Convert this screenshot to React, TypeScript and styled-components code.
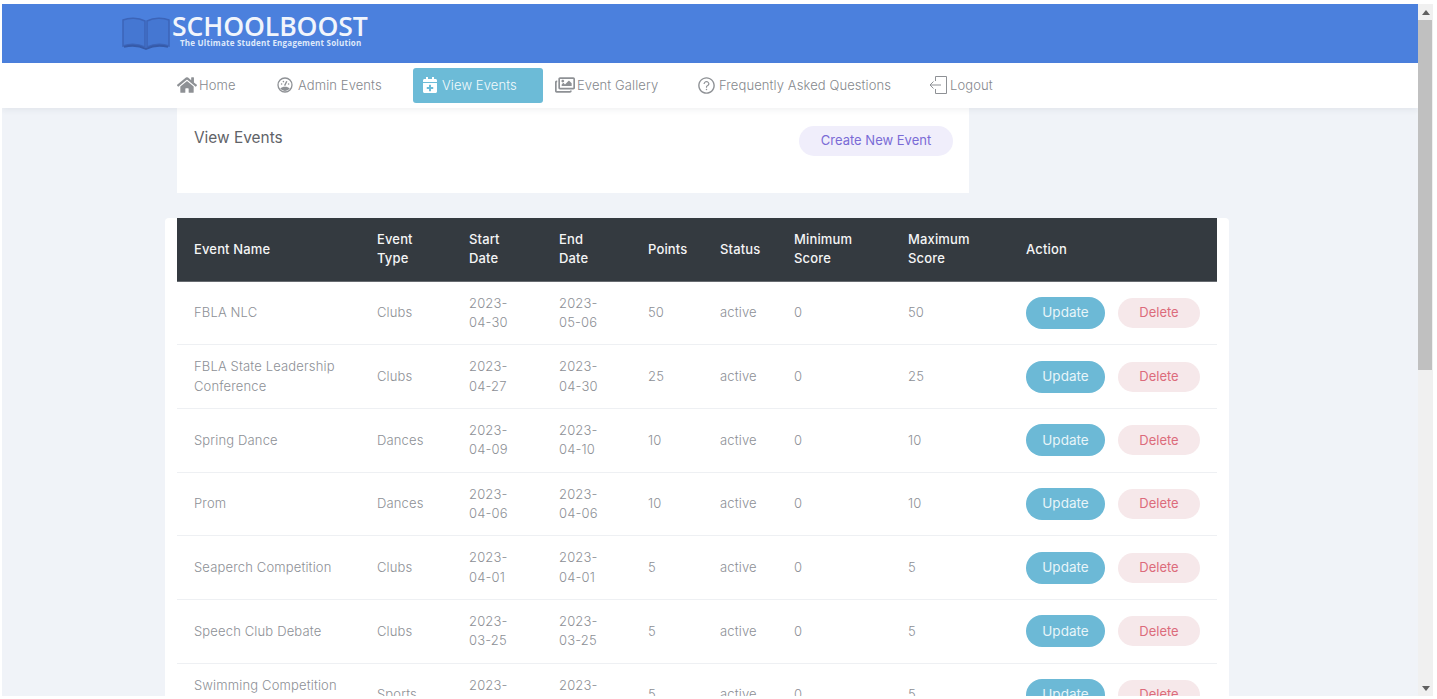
import React from "react";
import styled, { createGlobalStyle } from "styled-components";
import { FaHome, FaCalendarPlus, FaRegImages } from "react-icons/fa";
import { AiOutlineQuestionCircle } from "react-icons/ai";

const Global = createGlobalStyle`
  html, body { margin: 0; height: 100%; overflow: hidden; background: #fff; }
  #root { height: 100%; }
  * { box-sizing: border-box; }
`;

const Frame = styled.div`
  display: flex;
  height: 699px;
  padding: 4px 4px 3px 2px;
  overflow: hidden;
  background: #fff;
  font-family: Inter, "Liberation Sans", sans-serif;
`;
const Page = styled.div`
  flex: 1;
  min-width: 0;
  overflow: hidden;
  background: #f0f3f8;
`;
const Header = styled.header`
  display: flex;
  align-items: center;
  height: 59px;
  padding-left: 120px;
  background: #4b80dd;
`;
const Logo = styled.div`
  display: flex;
  align-items: flex-start;
  gap: 2px;
`;
const LogoWords = styled.div`
  display: flex;
  flex-direction: column;
  font-family: "Open Sans", sans-serif;
  color: #f1f5fc;
`;
const LogoName = styled.span`
  font-size: 26.6px;
  font-weight: 600;
  line-height: 24px;
  margin-top: -3px;
  letter-spacing: -0.1px;
`;
const LogoTag = styled.span`
  font-size: 8px;
  font-weight: 700;
  line-height: 10px;
  margin-left: 8px;
  letter-spacing: 0.22px;
  color: #dfe9fa;
`;
const Nav = styled.nav`
  position: relative;
  display: flex;
  align-items: center;
  height: 45px;
  padding-left: 175px;
  background: #fff;
  box-shadow: 0 2px 6px rgba(40, 50, 70, 0.07);
`;
const NavItem = styled.a<{ $w: number; $active?: boolean; $gap?: number }>`
  display: flex;
  align-items: center;
  gap: ${(p) => p.$gap ?? 2}px;
  flex: none;
  width: ${(p) => p.$w}px;
  height: 35px;
  padding-bottom: 1px;
  font-size: 13px;
  font-weight: 300;
  letter-spacing: 0.1px;
  color: ${(p) => (p.$active ? "#f2fafc" : "#85888d")};
  background: ${(p) => (p.$active ? "#6cbbd7" : "transparent")};
  border-radius: 3px;
  padding-left: ${(p) => (p.$active ? "9px" : "0")};
  margin-right: ${(p) => (p.$active ? "12px" : "0")};
  svg { flex: none; color: ${(p) => (p.$active ? "#fff" : "#8e9195")}; }
`;
const TopCard = styled.section`
  display: flex;
  justify-content: space-between;
  align-items: flex-start;
  width: 792px;
  height: 85px;
  margin-left: 175px;
  padding: 18px 16px 0 17px;
  background: #fff;
`;
const Title = styled.h2`
  margin: 1px 0 0;
  font-size: 15.4px;
  font-weight: 400;
  line-height: 22px;
  color: #5f6368;
`;
const CreateButton = styled.button`
  width: 154px;
  height: 30px;
  padding: 0 0 2px;
  border: 0;
  border-radius: 15px;
  background: #f0eefb;
  color: #7a6bd6;
  font: 400 13px Inter, sans-serif;
`;
const TableCard = styled.section`
  width: 1064px;
  margin: 25px 0 0 163px;
  padding: 0 12px;
  background: #fff;
  border-radius: 4px 4px 0 0;
`;
const Table = styled.table`
  width: 1040px;
  table-layout: fixed;
  border-collapse: collapse;
`;
const Th = styled.th<{ $w: number }>`
  width: ${(p) => p.$w}px;
  height: 63px;
  padding: 0 17px;
  text-align: left;
  background: #343a40;
  border-bottom: 1px solid #676b70;
  color: #f4f5f6;
  font-size: 13px;
  font-weight: 500;
  line-height: 19px;
  letter-spacing: 0.15px;
`;
const Tr = styled.tr`
  border-bottom: 1px solid #eef0f3;
`;
const Td = styled.td`
  padding: 12.15px 17px;
  font-size: 13px;
  font-weight: 300;
  line-height: 19.2px;
  letter-spacing: 0.15px;
  color: #8d9096;
  vertical-align: middle;
`;
const Actions = styled.div`
  display: flex;
  align-items: center;
  gap: 13px;
  white-space: nowrap;
`;
const UpdateButton = styled.button`
  flex: none;
  width: 79px;
  height: 32px;
  padding: 0 0 1px;
  border: 0;
  border-radius: 16px;
  background: #6cb9d6;
  color: #e8f5f9;
  font: 400 13.5px Inter, sans-serif;
`;
const DeleteButton = styled.button`
  flex: none;
  width: 82px;
  height: 30px;
  padding: 0 0 1px;
  border: 0;
  border-radius: 15px;
  background: #f6e8ea;
  color: #dc6b7b;
  font: 400 13px Inter, sans-serif;
`;
const Scrollbar = styled.div`
  flex: none;
  display: flex;
  flex-direction: column;
  width: 15px;
  background: #f0f0f0;
`;
const ScrollArrow = styled.div`
  flex: none;
  display: flex;
  align-items: center;
  justify-content: center;
  height: 16px;
  color: #606060;
`;
const ScrollThumb = styled.div`
  flex: none;
  height: 350px;
  background: #c0c0c0;
  margin-right: 1px;
`;
const ScrollRest = styled.div`
  flex: 1;
`;

function GaugeIcon() {
  return (
    <svg width="16" height="16" viewBox="0 0 16 16" fill="none">
      <circle cx="8" cy="8" r="7" stroke="currentColor" strokeWidth="1.3" />
      <path d="M3.2 11.500a6 6 0 0 0 9.600 0C11.500 10.200 10 9.700 8 9.700s-3.500.5-4.800 1.800z" fill="currentColor" />
      <path d="M7.600 8.600 9.800 4.200" stroke="currentColor" strokeWidth="1.4" />
      <circle cx="4.600" cy="7" r=".8" fill="currentColor" />
      <circle cx="6.400" cy="4.600" r=".8" fill="currentColor" />
      <circle cx="11.600" cy="7" r=".8" fill="currentColor" />
    </svg>
  );
}
function LogoutIcon() {
  return (
    <svg width="19" height="20" viewBox="0 0 19 20" fill="none" stroke="currentColor" strokeWidth="1">
      <path d="M6.500 6V1.500h11v17h-11V14" />
      <path d="M12 10H1M4.500 6.500 1 10l3.500 3.500" />
    </svg>
  );
}
function BookIcon() {
  return (
    <svg width="48" height="33" viewBox="0 0 48 33" fill="none">
      <path d="M1 3c6-2.500 15-2.500 22 1v26c-7-3-16-3-22-1z" fill="#4577d2" stroke="#3c64b8" strokeWidth="1.500" />
      <path d="M47 3c-6-2.500-15-2.500-22 1v26c7-3 16-3 22-1z" fill="#4577d2" stroke="#3c64b8" strokeWidth="1.500" />
      <path d="M2 30c7-2 15-1.500 22 2 7-3.500 15-4 22-2" stroke="#365aa8" strokeWidth="1.800" />
    </svg>
  );
}

const columns: [string, number][] = [
  ["Event Name", 183],
  ["Event Type", 92],
  ["Start Date", 90],
  ["End Date", 89],
  ["Points", 72],
  ["Status", 74],
  ["Minimum Score", 114],
  ["Maximum Score", 118],
  ["Action", 208],
];

const rows = [
  ["FBLA NLC", "Clubs", "2023-04-30", "2023-05-06", "50", "active", "0", "50"],
  ["FBLA State Leadership Conference", "Clubs", "2023-04-27", "2023-04-30", "25", "active", "0", "25"],
  ["Spring Dance", "Dances", "2023-04-09", "2023-04-10", "10", "active", "0", "10"],
  ["Prom", "Dances", "2023-04-06", "2023-04-06", "10", "active", "0", "10"],
  ["Seaperch Competition", "Clubs", "2023-04-01", "2023-04-01", "5", "active", "0", "5"],
  ["Speech Club Debate", "Clubs", "2023-03-25", "2023-03-25", "5", "active", "0", "5"],
  ["Swimming Competition", "Sports", "2023-03-18", "2023-03-18", "5", "active", "0", "5"],
];

export default function App() {
  return (
    <Frame>
      <Global />
      <Page>
        <Header>
          <Logo>
            <BookIcon />
            <LogoWords>
              <LogoName>SCHOOLBOOST</LogoName>
              <LogoTag>The Ultimate Student Engagement Solution</LogoTag>
            </LogoWords>
          </Logo>
        </Header>
        <Nav>
          <NavItem $w={100}><FaHome size={20} />Home</NavItem>
          <NavItem $w={136} $gap={5}><GaugeIcon />Admin Events</NavItem>
          <NavItem $w={130} $active $gap={4}><FaCalendarPlus size={16} />View Events</NavItem>
          <NavItem $w={142}><FaRegImages size={20} />Event Gallery</NavItem>
          <NavItem $w={232} $gap={3}><AiOutlineQuestionCircle size={19} />Frequently Asked Questions</NavItem>
          <NavItem $w={70}><LogoutIcon />Logout</NavItem>
        </Nav>
        <TopCard>
          <Title>View Events</Title>
          <CreateButton>Create New Event</CreateButton>
        </TopCard>
        <TableCard>
          <Table>
            <thead>
              <tr>
                {columns.map(([label, w]) => (
                  <Th key={label} $w={w}>{label}</Th>
                ))}
              </tr>
            </thead>
            <tbody>
              {rows.map((row) => (
                <Tr key={row[0]}>
                  {row.map((cell, i) => (
                    <Td key={i}>
                      {cell}
                      {row[0] === "Swimming Competition" && i === 0 ? <><br />&nbsp;</> : null}
                    </Td>
                  ))}
                  <Td>
                    <Actions>
                      <UpdateButton>Update</UpdateButton>
                      <DeleteButton>Delete</DeleteButton>
                    </Actions>
                  </Td>
                </Tr>
              ))}
            </tbody>
          </Table>
        </TableCard>
      </Page>
      <Scrollbar>
        <ScrollArrow>
          <svg width="8" height="5" viewBox="0 0 8 5"><path d="M4 0l4 5H0z" fill="currentColor" /></svg>
        </ScrollArrow>
        <ScrollThumb />
        <ScrollRest />
        <ScrollArrow>
          <svg width="8" height="5" viewBox="0 0 8 5"><path d="M0 0h8L4 5z" fill="currentColor" /></svg>
        </ScrollArrow>
      </Scrollbar>
    </Frame>
  );
}
